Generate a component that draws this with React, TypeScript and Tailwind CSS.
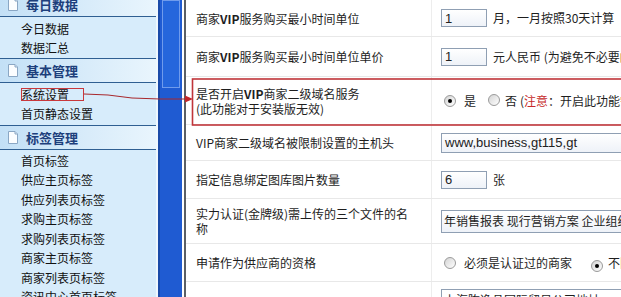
import React from 'react';

const groups = [
  { title: '每日数据', items: ['今日数据', '数据汇总'], pad: 'pt-[2px]' },
  { title: '基本管理', items: ['系统设置', '首页静态设置'], pad: 'pt-[2px] pb-[1px]' },
  {
    title: '标签管理',
    items: ['首页标签', '供应主页标签', '供应列表页标签', '求购主页标签', '求购列表页标签', '商家主页标签', '商家列表页标签', '资讯中心首页标签'],
    pad: 'pt-[1px]',
  },
];

function PageIcon() {
  return (
    <svg width="12" height="15" viewBox="0 0 12 15">
      <path d="M1.5 1.5 H8 L10.5 4 V13.5 H1.5 Z" fill="#fbfdff" stroke="#8aa7c4" />
      <path d="M8 1.5 V4 H10.5" fill="#dbe7f3" stroke="#8aa7c4" />
    </svg>
  );
}

function Radio({ checked }: { checked?: boolean }) {
  return (
    <span className="inline-flex h-[12px] w-[12px] shrink-0 items-center justify-center rounded-full border border-[#9a9a9a] bg-gradient-to-br from-[#d4d4d4] to-white">
      {checked && <span className="h-[4px] w-[4px] rounded-full bg-black" />}
    </span>
  );
}

function Box({ value, wide }: { value: string; wide?: boolean }) {
  return (
    <div
      className={
        (wide ? 'h-[20px] w-[200px] ' : 'h-[18px] w-[46px] ') +
        'flex shrink-0 items-center whitespace-nowrap overflow-hidden border border-[#8f9fb3] bg-gradient-to-b from-white to-[#eef2f8] pl-[3px] text-[13px] leading-none text-[#222] font-["Liberation_Sans","Noto_Sans_CJK_SC",sans-serif]'
      }
    >
      {value}
    </div>
  );
}

function Row({ h, label, children }: { h: string; label: React.ReactNode; children?: React.ReactNode }) {
  return (
    <div className={h + ' flex border-b border-[#e8e8e8]'}>
      <div className="flex w-[246px] shrink-0 items-center border-r border-[#ededed] pl-[10px] leading-[15px]">{label}</div>
      <div className="flex flex-1 items-center gap-[6px] whitespace-nowrap pl-[9px]">{children}</div>
    </div>
  );
}

export default function App() {
  return (
    <div className="relative flex h-[297px] w-[621px] overflow-hidden bg-white text-[12px] text-[#1e1e1e] font-['Noto_Sans_CJK_SC','Liberation_Sans',sans-serif]">
      {/* left menu */}
      <div className="w-[156px] shrink-0 bg-[#d7ecfb]">
        <div className="mt-[-8px]">
          {groups.map((g) => (
            <div key={g.title}>
              <div className="flex h-[25px] items-center border-y border-[#2f5f92] bg-gradient-to-r from-[#c3e0f6] to-[#e9f5fd] pl-[7px]">
                <PageIcon />
                <span className="ml-[7px] text-[13px] font-bold text-[#1d3f7c]">{g.title}</span>
              </div>
              <div className={g.pad}>
                {g.items.map((it) => (
                  <div key={it} className="flex h-[19.5px] items-center whitespace-nowrap pl-[21px] text-[12px] text-[#111]">
                    {it}
                  </div>
                ))}
              </div>
            </div>
          ))}
        </div>
      </div>

      {/* splitter bar */}
      <div className="w-[2px] shrink-0 bg-[#eef7fe]" />
      <div className="w-[2px] shrink-0 bg-[#1a4aa8]" />
      <div className="flex w-[22px] shrink-0 flex-col bg-[#1f5bd2]">
        <div className="ml-[2px] mr-[2px] h-[88px] border border-[#6f9bec] bg-[#2566dc]" />
      </div>
      <div className="w-[2px] shrink-0 bg-white" />
      <div className="w-[2px] shrink-0 bg-[#5a5f66]" />

      {/* settings table */}
      <div className="flex-1">
        <Row h="h-[37px]" label={<span>商家<b>VIP</b>服务购买最小时间单位</span>}>
          <Box value="1" />
          <span>月，一月按照30天计算</span>
        </Row>
        <Row h="h-[40px]" label={<span>商家<b>VIP</b>服务购买最小时间单位单价</span>}>
          <Box value="1" />
          <span>元人民币 (为避免不必要的麻烦</span>
        </Row>
        <Row
          h="h-[48px]"
          label={
            <span>
              是否开启<b>VIP</b>商家二级域名服务
              <br />
              (此功能对于安装版无效)
            </span>
          }
        >
          <span className="flex items-center pl-[3px]">
            <Radio checked />
            <span className="ml-[8px]">是</span>
            <span className="ml-[12px]">
              <Radio />
            </span>
            <span className="ml-[5px]">否</span>
            <span className="ml-[3px]">
              (<span className="text-[#c62a2a]">注意</span>：开启此功能需要
            </span>
          </span>
        </Row>
        <Row h="h-[36px]" label="VIP商家二级域名被限制设置的主机头">
          <Box wide value="www,business,gt115,gt" />
        </Row>
        <Row h="h-[38px]" label="指定信息绑定图库图片数量">
          <Box value="6" />
          <span>张</span>
        </Row>
        <Row
          h="h-[45px]"
          label={
            <span>
              实力认证(金牌级)需上传的三个文件的名
              <br />
              称
            </span>
          }
        >
          <div className="flex h-[23px] w-[200px] items-center overflow-hidden whitespace-nowrap border border-[#8f9fb3] bg-gradient-to-b from-white to-[#eef2f8] pl-[2px] text-[12px]">
            年销售报表 现行营销方案 企业组织结构
          </div>
        </Row>
        <Row h="h-[38px]" label="申请作为供应商的资格">
          <span className="flex items-center pl-[3px]">
            <Radio />
            <span className="ml-[8px]">必须是认证过的商家</span>
            <span className="ml-[19px]">
              <Radio checked />
            </span>
            <span className="ml-[5px]">不限</span>
          </span>
        </Row>
        <div className="flex h-[40px]">
          <div className="w-[246px] shrink-0 border-r border-[#ededed]" />
          <div className="pl-[9px] pt-[7px]">
            <div className="flex h-[22px] w-[200px] items-center overflow-hidden whitespace-nowrap border border-[#8f9fb3] pl-[2px]">
              上海陈逸品国际贸易公司地址
            </div>
          </div>
        </div>
      </div>

      {/* red annotation */}
      <svg className="pointer-events-none absolute left-0 top-0" width="621" height="297">
        <rect x="21.5" y="88.5" width="62" height="12" fill="none" stroke="#c9383c" strokeWidth="1" />
        <path d="M84 94 L108 95 L132 98 L160 99 L186 99" fill="none" stroke="#a8282d" strokeWidth="1" />
        <polygon points="185,95.5 193,99 185,102.5" fill="#c0262b" />
        <rect x="192.5" y="79" width="440" height="46" fill="none" stroke="#c0353a" strokeWidth="1.6" />
      </svg>
    </div>
  );
}
